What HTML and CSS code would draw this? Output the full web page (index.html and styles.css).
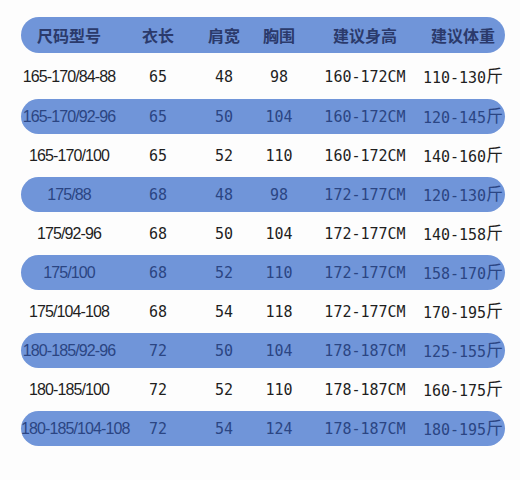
FILE: index.html
```html
<!DOCTYPE html>
<html lang="zh">
<head>
<meta charset="utf-8">
<title>尺码表</title>
<link rel="stylesheet" href="styles.css">
</head>
<body>
<div class="chart">
  <div class="row head">
    <div class="c">尺码型号</div><div class="c">衣长</div><div class="c">肩宽</div><div class="c">胸围</div><div class="c">建议身高</div><div class="c">建议体重</div>
  </div>
  <div class="row plain first">
    <div class="c sz">165-170/84-88</div><div class="c num">65</div><div class="c num">48</div><div class="c num">98</div><div class="c num">160-172CM</div><div class="c num">110-130<span class="jin">斤</span></div>
  </div>
  <div class="row bar">
    <div class="c sz">165-170/92-96</div><div class="c num">65</div><div class="c num">50</div><div class="c num">104</div><div class="c num">160-172CM</div><div class="c num">120-145<span class="jin">斤</span></div>
  </div>
  <div class="row plain">
    <div class="c sz">165-170/100</div><div class="c num">65</div><div class="c num">52</div><div class="c num">110</div><div class="c num">160-172CM</div><div class="c num">140-160<span class="jin">斤</span></div>
  </div>
  <div class="row bar">
    <div class="c sz">175/88</div><div class="c num">68</div><div class="c num">48</div><div class="c num">98</div><div class="c num">172-177CM</div><div class="c num">120-130<span class="jin">斤</span></div>
  </div>
  <div class="row plain">
    <div class="c sz">175/92-96</div><div class="c num">68</div><div class="c num">50</div><div class="c num">104</div><div class="c num">172-177CM</div><div class="c num">140-158<span class="jin">斤</span></div>
  </div>
  <div class="row bar">
    <div class="c sz">175/100</div><div class="c num">68</div><div class="c num">52</div><div class="c num">110</div><div class="c num">172-177CM</div><div class="c num">158-170<span class="jin">斤</span></div>
  </div>
  <div class="row plain">
    <div class="c sz">175/104-108</div><div class="c num">68</div><div class="c num">54</div><div class="c num">118</div><div class="c num">172-177CM</div><div class="c num">170-195<span class="jin">斤</span></div>
  </div>
  <div class="row bar">
    <div class="c sz">180-185/92-96</div><div class="c num">72</div><div class="c num">50</div><div class="c num">104</div><div class="c num">178-187CM</div><div class="c num">125-155<span class="jin">斤</span></div>
  </div>
  <div class="row plain">
    <div class="c sz">180-185/100</div><div class="c num">72</div><div class="c num">52</div><div class="c num">110</div><div class="c num">178-187CM</div><div class="c num">160-175<span class="jin">斤</span></div>
  </div>
  <div class="row bar">
    <div class="c sz">180-185/104-108</div><div class="c num">72</div><div class="c num">54</div><div class="c num">124</div><div class="c num">178-187CM</div><div class="c num">180-195<span class="jin">斤</span></div>
  </div>
</div>
</body>
</html>
```
FILE: styles.css
```css
html, body {
  margin: 0;
  padding: 0;
  background: #fdfdfd;
}
.chart {
  width: 484px;
  padding: 17px 0 0 21px;
  display: flex;
  flex-direction: column;
}
.row {
  display: grid;
  grid-template-columns: 96px 82px 50px 60px 112px 84px;
  align-items: center;
  height: 43px;
  color: #1f1f1f;
}
.row.first {
  height: 46px;
  padding-top: 2px;
  box-sizing: border-box;
}
.row.head, .row.bar {
  background: #7095d9;
  border-radius: 18px;
  color: #2b4583;
  height: 35px;
}
.row.head {
  height: 36px;
  color: #2b3a6b;
  font-family: "Noto Sans CJK SC", sans-serif;
  font-weight: 700;
  font-size: 16px;
}
.c {
  text-align: center;
  white-space: nowrap;
  line-height: 20px;
}
.sz {
  font-family: "Liberation Sans Narrow", "Liberation Sans", sans-serif;
  font-size: 16px;
  letter-spacing: -0.9px;
}
.num {
  font-family: "DejaVu Sans Mono", "Liberation Mono", monospace;
  font-size: 15px;
}
.jin {
  font-family: "Noto Sans CJK SC", sans-serif;
  font-size: 17px;
  line-height: 1;
  vertical-align: 1px;
}
```
